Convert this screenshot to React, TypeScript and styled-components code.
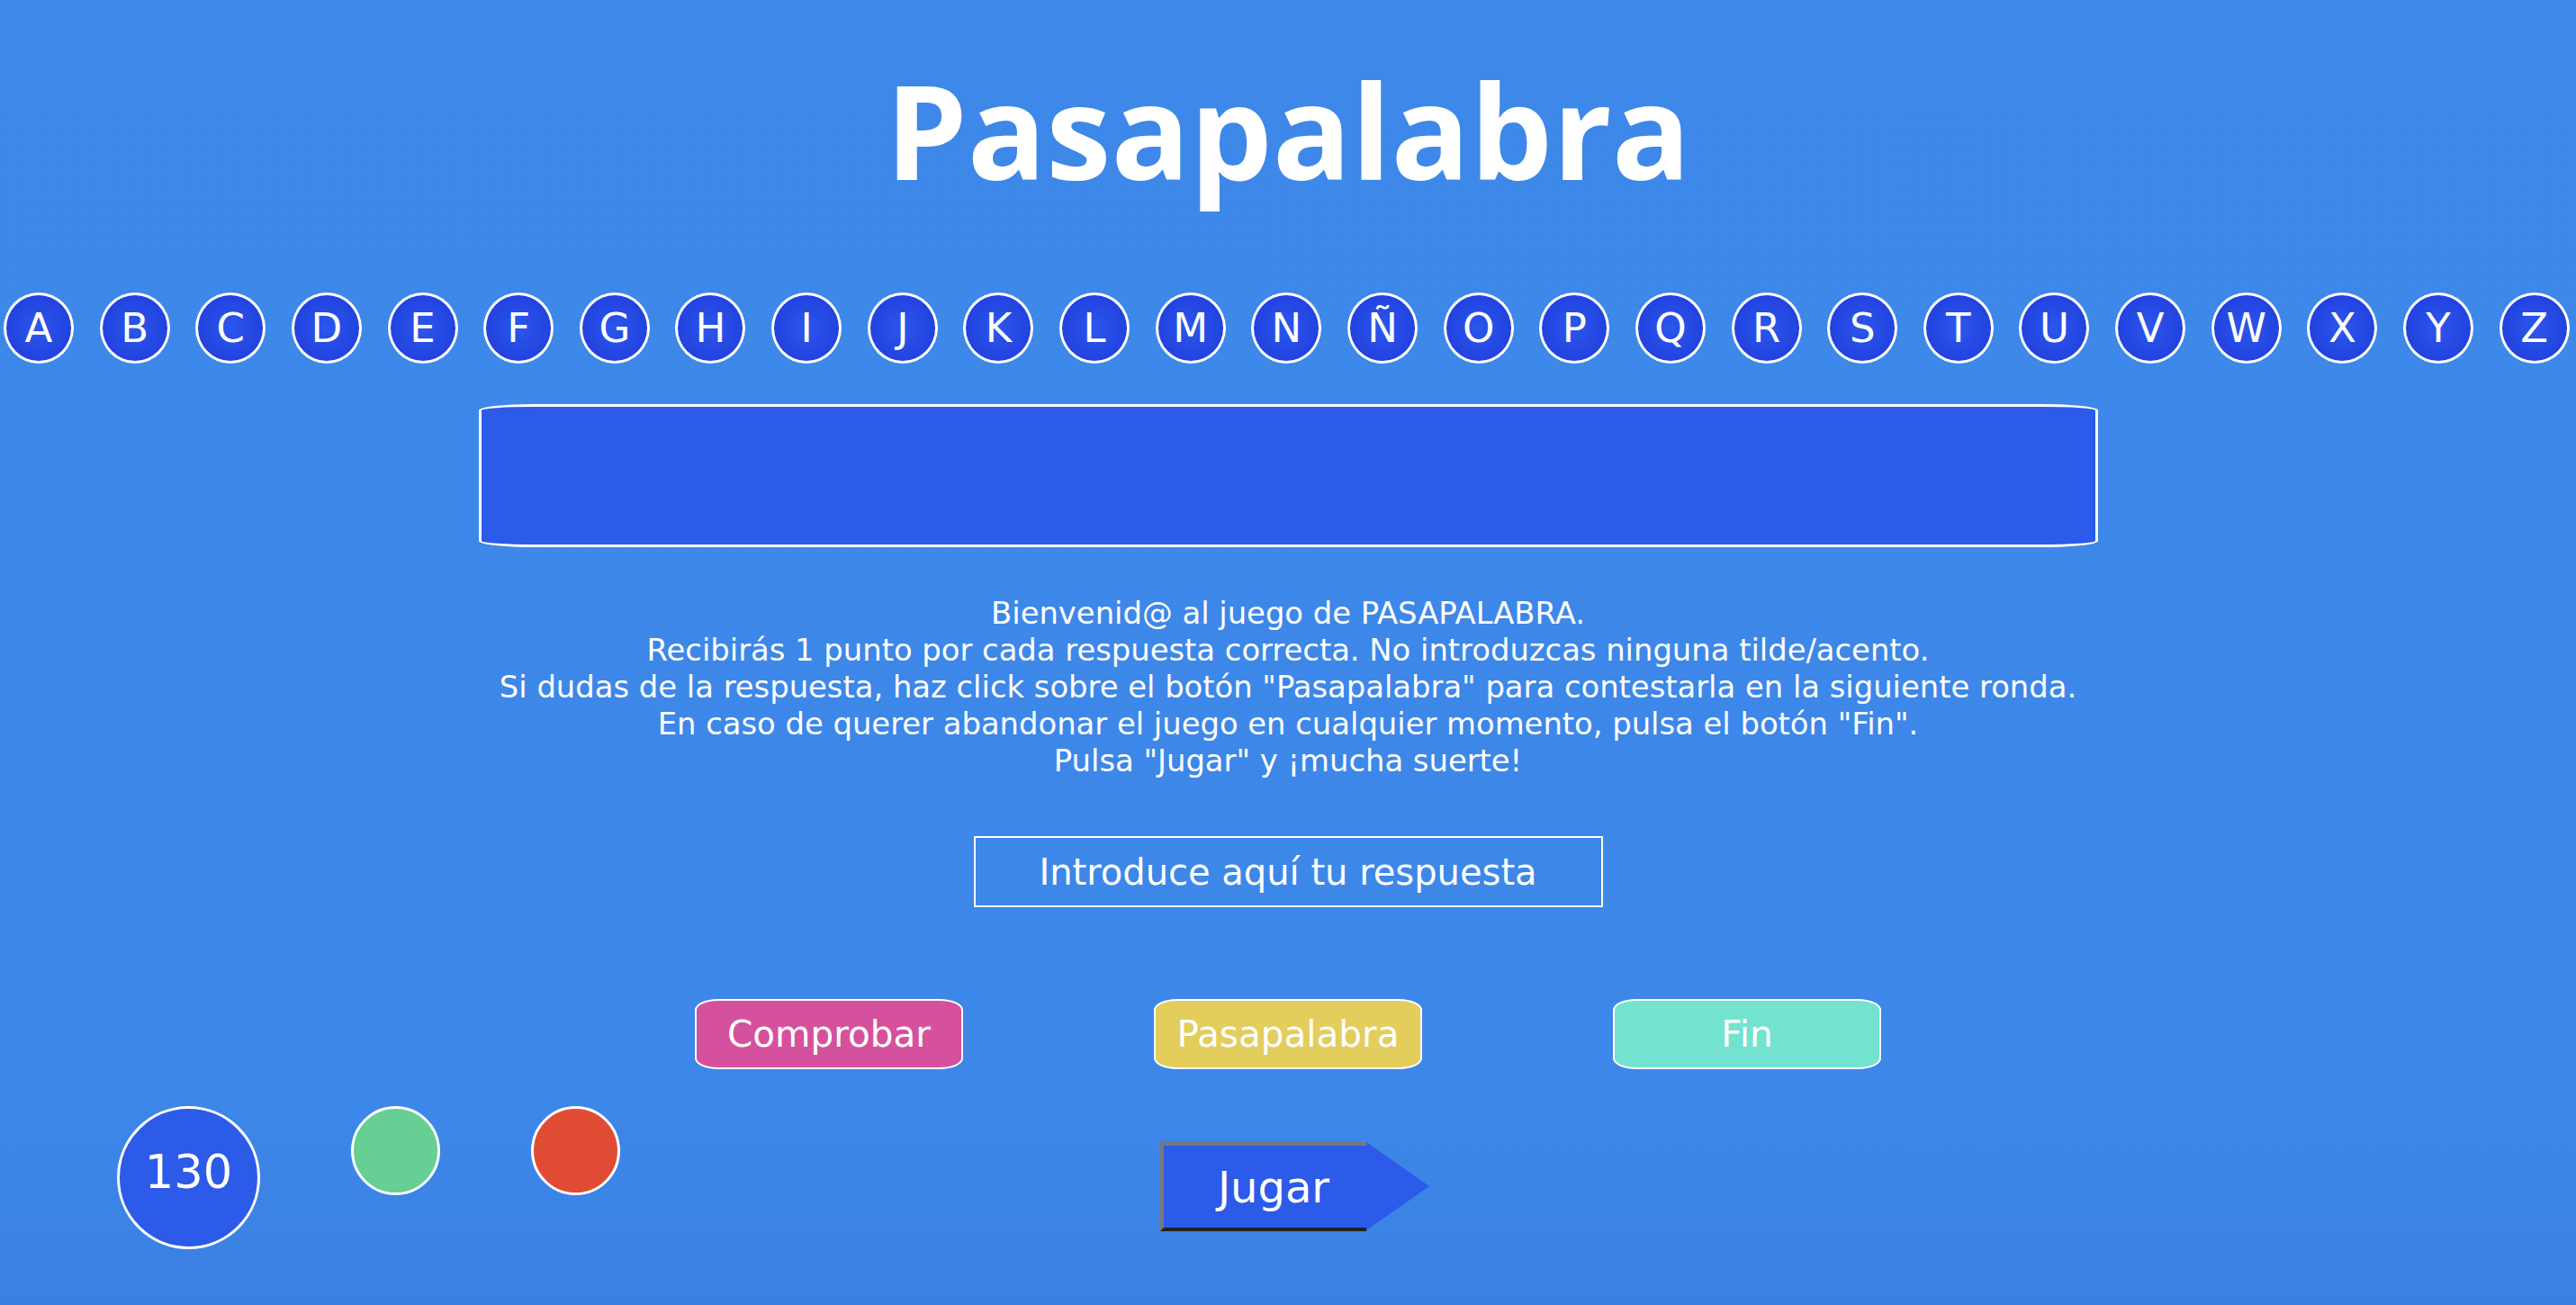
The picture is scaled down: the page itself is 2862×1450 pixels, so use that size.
import React from 'react';
import styled, { createGlobalStyle } from 'styled-components';

const GlobalStyle = createGlobalStyle`
  html, body {
    margin: 0;
    padding: 0;
  }
  body {
    background: #3d87e8;
    font-family: 'DejaVu Sans', 'Liberation Sans', sans-serif;
    color: #ffffff;
  }
`;

const Page = styled.div`
  width: 2862px;
  height: 1450px;
  padding-top: 71px;
  box-sizing: border-box;
  display: flex;
  flex-direction: column;
  align-items: center;
  background: linear-gradient(180deg, #3d88e9 0%, #3d87e8 85%, #3a80e2 100%);
`;

const Title = styled.h1`
  margin: 0;
  font-family: 'Open Sans', 'DejaVu Sans', sans-serif;
  font-weight: 700;
  font-size: 145px;
  line-height: 145px;
  color: #ffffff;
`;

const LetterRow = styled.div`
  width: 100%;
  box-sizing: border-box;
  margin-top: 109px;
  padding: 0 7px 0 4px;
  display: flex;
  justify-content: space-between;
`;

const Letter = styled.div`
  width: 78px;
  height: 79px;
  box-sizing: border-box;
  border: 3px solid #ffffff;
  border-radius: 50%;
  background: radial-gradient(circle, #2c56eb 0%, #2447e2 55%, #1c38d5 100%);
  display: flex;
  align-items: center;
  justify-content: center;
  font-size: 45px;
  color: #ffffff;
`;

const Board = styled.div`
  margin-top: 45px;
  width: 1799px;
  height: 159px;
  box-sizing: border-box;
  border: 3px solid #ffffff;
  border-radius: 62px / 7px;
  background: #2c5ae9;
`;

const Instructions = styled.p`
  margin: 53px 0 0;
  text-align: center;
  font-size: 33.8px;
  line-height: 41px;
  color: #ffffff;
`;

const AnswerInput = styled.input`
  margin-top: 63px;
  width: 699px;
  height: 79px;
  box-sizing: border-box;
  border: 2px solid #ffffff;
  border-radius: 0;
  background: transparent;
  outline: none;
  text-align: center;
  font-family: 'DejaVu Sans', 'Liberation Sans', sans-serif;
  font-size: 40px;
  color: #ffffff;
  &::placeholder {
    color: #ffffff;
    opacity: 1;
  }
`;

const ButtonRow = styled.div`
  margin-top: 102px;
  display: flex;
  gap: 212px;
`;

const ActionButton = styled.button<{ $bg: string }>`
  width: 298px;
  height: 78px;
  box-sizing: border-box;
  border: 2px solid #ffffff;
  border-radius: 26px / 12px;
  background: ${(p) => p.$bg};
  color: #ffffff;
  font-family: 'DejaVu Sans', 'Liberation Sans', sans-serif;
  font-size: 40.5px;
  padding: 0;
  cursor: pointer;
`;

const BottomRow = styled.div`
  margin-top: 41px;
  width: 100%;
  display: grid;
  grid-template-columns: 1fr auto 1fr;
  align-items: start;
`;

const Scores = styled.div`
  padding-left: 130px;
  display: flex;
  align-items: flex-start;
  gap: 101px;
`;

const ScoreCircle = styled.div`
  width: 159px;
  height: 159px;
  box-sizing: border-box;
  border: 3px solid #ffffff;
  border-radius: 50%;
  background: #2c5ae9;
  display: flex;
  align-items: center;
  justify-content: center;
  padding-bottom: 12px;
  font-size: 51px;
  color: #ffffff;
`;

const Dot = styled.div<{ $color: string }>`
  width: 99px;
  height: 99px;
  box-sizing: border-box;
  border: 3px solid #ffffff;
  border-radius: 50%;
  background: ${(p) => p.$color};
`;

const PlayButton = styled.button`
  position: relative;
  margin: 40px 63px 0 7px;
  width: 229px;
  height: 99px;
  box-sizing: border-box;
  border-style: solid;
  border-width: 4px 0 4px 4px;
  border-color: #787878 transparent #222222 #787878;
  background: #2c5ae9;
  color: #ffffff;
  font-family: 'DejaVu Sans', 'Liberation Sans', sans-serif;
  font-size: 48px;
  padding: 0 0 0 20px;
  cursor: pointer;
  &::after {
    content: '';
    position: absolute;
    top: -4px;
    right: -70px;
    width: 0;
    height: 0;
    border-left: 70px solid #2c5ae9;
    border-top: 49.5px solid transparent;
    border-bottom: 49.5px solid transparent;
  }
`;

const LETTERS = [
  'A', 'B', 'C', 'D', 'E', 'F', 'G', 'H', 'I', 'J', 'K', 'L', 'M', 'N',
  'Ñ', 'O', 'P', 'Q', 'R', 'S', 'T', 'U', 'V', 'W', 'X', 'Y', 'Z',
];

export default function App() {
  return (
    <>
      <GlobalStyle />
      <Page>
        <Title>Pasapalabra</Title>
        <LetterRow>
          {LETTERS.map((l) => (
            <Letter key={l}>{l}</Letter>
          ))}
        </LetterRow>
        <Board />
        <Instructions>
          Bienvenid@ al juego de PASAPALABRA.
          <br />
          Recibirás 1 punto por cada respuesta correcta. No introduzcas ninguna tilde/acento.
          <br />
          Si dudas de la respuesta, haz click sobre el botón "Pasapalabra" para contestarla en la siguiente ronda.
          <br />
          En caso de querer abandonar el juego en cualquier momento, pulsa el botón "Fin".
          <br />
          Pulsa "Jugar" y ¡mucha suerte!
        </Instructions>
        <AnswerInput placeholder="Introduce aquí tu respuesta" />
        <ButtonRow>
          <ActionButton $bg="#d6519d">Comprobar</ActionButton>
          <ActionButton $bg="#e3cd5d">Pasapalabra</ActionButton>
          <ActionButton $bg="#73e3cf">Fin</ActionButton>
        </ButtonRow>
        <BottomRow>
          <Scores>
            <ScoreCircle>130</ScoreCircle>
            <Dot $color="#66cf94" />
            <Dot $color="#e04c33" />
          </Scores>
          <PlayButton>Jugar</PlayButton>
          <div />
        </BottomRow>
      </Page>
    </>
  );
}
